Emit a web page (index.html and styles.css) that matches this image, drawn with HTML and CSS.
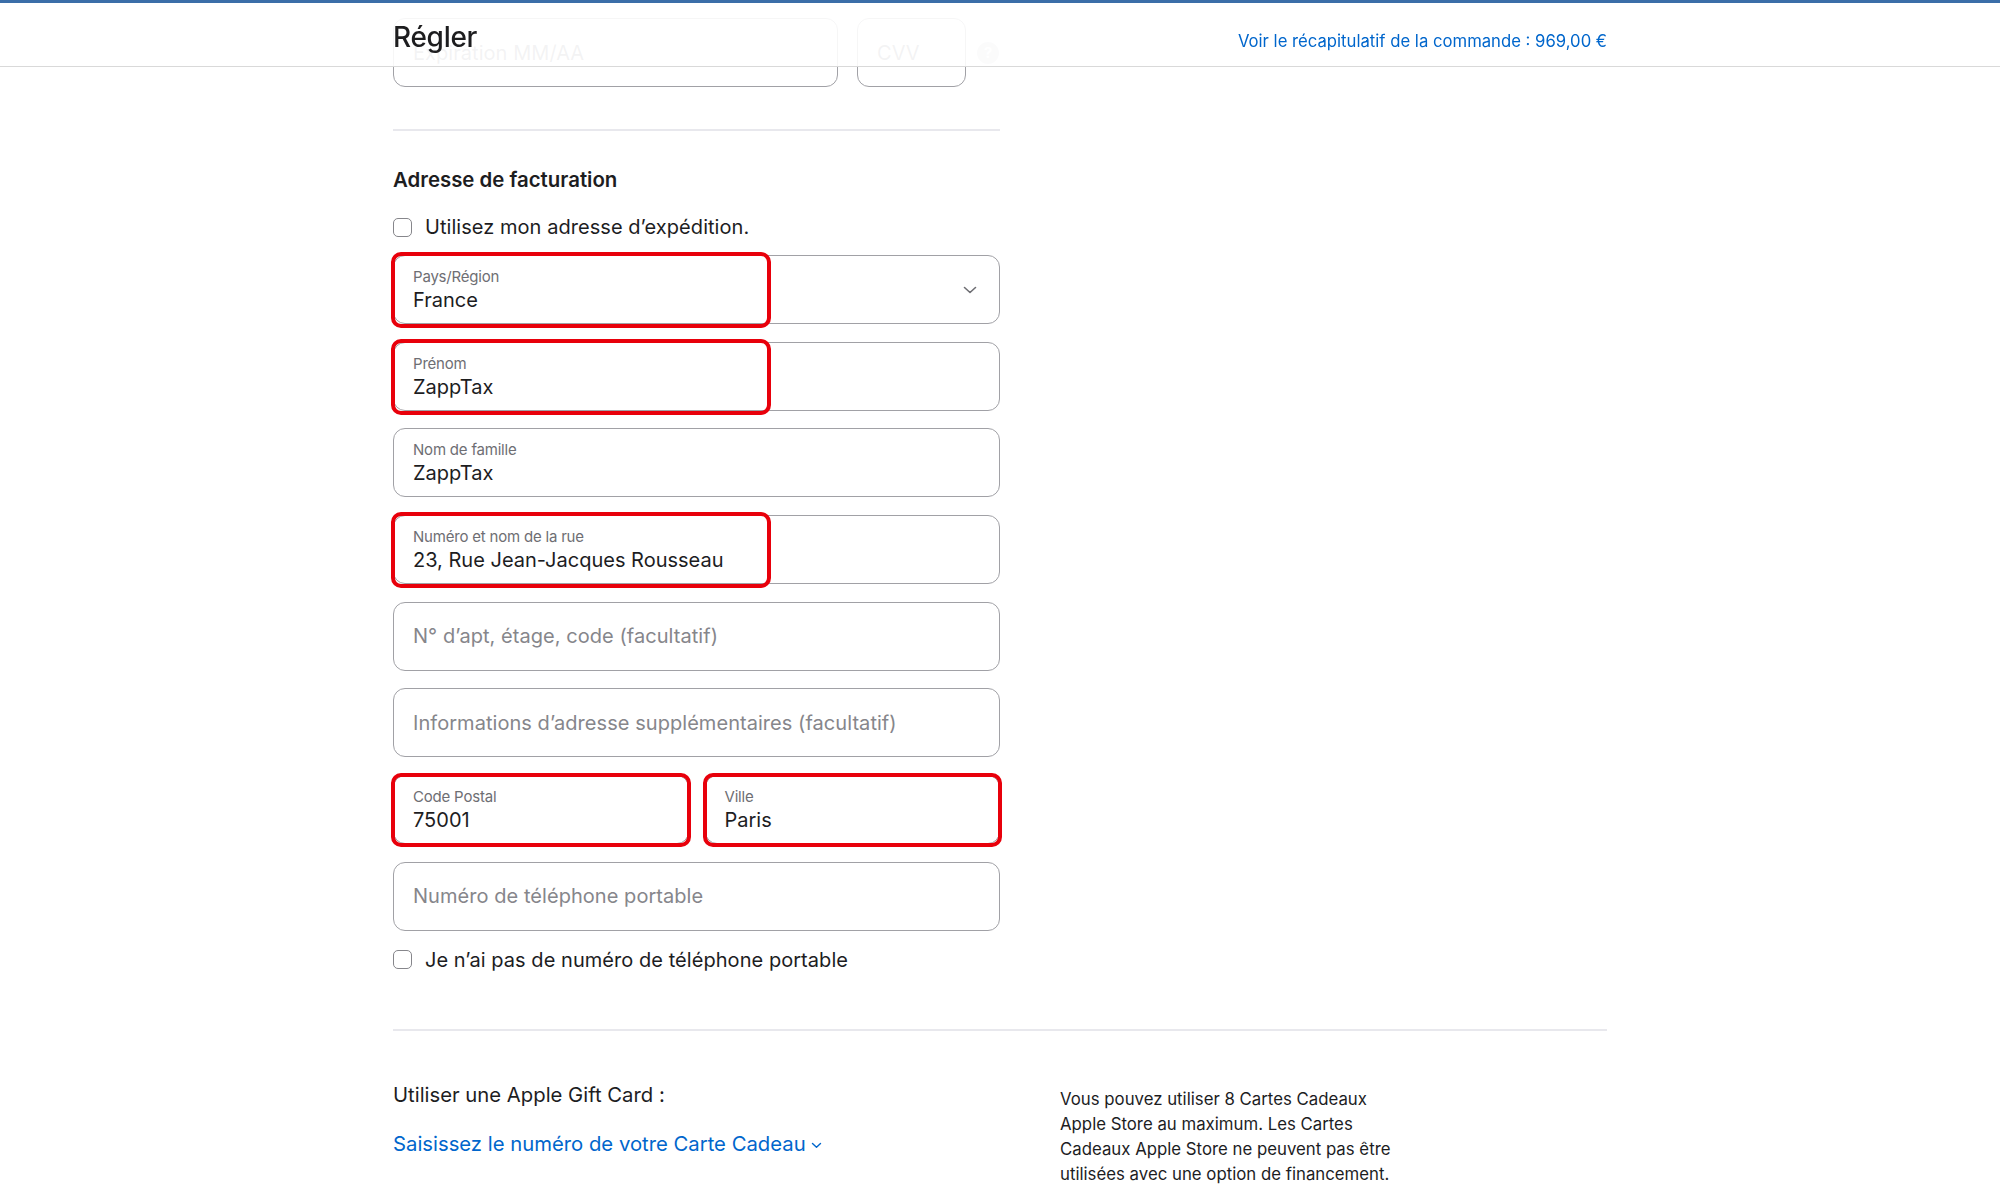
FILE: index.html
```html
<!DOCTYPE html>
<html lang="fr">
<head>
  <meta charset="UTF-8" />
  <title>Régler</title>
  <meta name="viewport" content="width=device-width, initial-scale=1.0"/>
  <link rel="stylesheet" href="styles.css">
</head>
<body>
  <header class="topbar">
    <div class="topbar-inner">
      <h1>Régler</h1>
      <a href="#" class="summary-link">Voir le récapitulatif de la commande : 969,00 €</a>
    </div>
  </header>

  <main class="page">
    <div class="form-col">
      <div class="card-row">
        <div class="field field-placeholder expiry"><span class="placeholder">Expiration MM/AA</span></div>
        <div class="field field-placeholder cvv"><span class="placeholder">CVV</span></div>
        <span class="help">?</span>
      </div>

      <hr class="divider">

      <h2>Adresse de facturation</h2>

      <label class="check-row">
        <input type="checkbox">
        <span>Utilisez mon adresse d’expédition.</span>
      </label>

      <div class="fields">
        <div class="field">
          <span class="label">Pays/Région</span>
          <span class="value">France</span>
          <svg class="chevron" width="14" height="8" viewBox="0 0 14 8"><path d="M1.5 1.5 L7 6.5 L12.5 1.5" fill="none" stroke="#6e6e73" stroke-width="1.6" stroke-linecap="round" stroke-linejoin="round"/></svg>
          <div class="mark"></div>
        </div>

        <div class="field">
          <span class="label">Prénom</span>
          <span class="value">ZappTax</span>
          <div class="mark"></div>
        </div>

        <div class="field">
          <span class="label">Nom de famille</span>
          <span class="value">ZappTax</span>
        </div>

        <div class="field">
          <span class="label">Numéro et nom de la rue</span>
          <span class="value">23, Rue Jean-Jacques Rousseau</span>
          <div class="mark"></div>
        </div>

        <div class="field field-placeholder">
          <span class="placeholder">N° d’apt, étage, code (facultatif)</span>
        </div>

        <div class="field field-placeholder">
          <span class="placeholder">Informations d’adresse supplémentaires (facultatif)</span>
        </div>

        <div class="field-pair">
          <div class="field">
            <span class="label">Code Postal</span>
            <span class="value">75001</span>
            <div class="mark mark-full"></div>
          </div>
          <div class="field">
            <span class="label">Ville</span>
            <span class="value">Paris</span>
            <div class="mark mark-full"></div>
          </div>
        </div>

        <div class="field field-placeholder">
          <span class="placeholder">Numéro de téléphone portable</span>
        </div>
      </div>

      <label class="check-row check-phone">
        <input type="checkbox">
        <span>Je n’ai pas de numéro de téléphone portable</span>
      </label>
    </div>

    <hr class="divider divider-wide">

    <section class="gift">
      <div class="gift-left">
        <p class="gift-title">Utiliser une Apple Gift Card :</p>
        <a href="#" class="gift-link">Saisissez le numéro de votre Carte Cadeau
          <svg width="11" height="7" viewBox="0 0 11 7"><path d="M1.5 1.5 L5.5 5.2 L9.5 1.5" fill="none" stroke="#0066cc" stroke-width="1.4" stroke-linecap="round" stroke-linejoin="round"/></svg>
        </a>
      </div>
      <p class="gift-note">Vous pouvez utiliser 8 Cartes Cadeaux Apple Store au maximum. Les Cartes Cadeaux Apple Store ne peuvent pas être utilisées avec une option de financement.</p>
    </section>
  </main>
</body>
</html>
```

FILE: styles.css
```css
body {
  margin: 0;
  font-family: 'Inter', 'Noto Sans', sans-serif;
  color: #1d1d1f;
  background: #fff;
}

.topbar {
  position: fixed;
  top: 0;
  left: 0;
  right: 0;
  height: 63px;
  border-top: 3px solid #3b6ea8;
  border-bottom: 1px solid #d9d9d9;
  background: rgba(255, 255, 255, 0.9);
  z-index: 10;
}

.topbar-inner {
  width: 1214px;
  margin: 0 auto;
  height: 100%;
  display: flex;
  justify-content: space-between;
  align-items: baseline;
  padding-top: 17px;
  box-sizing: border-box;
}

h1 {
  margin: 0;
  font-size: 28px;
  font-weight: 500;
  letter-spacing: -0.3px;
}

.summary-link {
  font-size: 16.7px;
  color: #0066cc;
  text-decoration: none;
}

.page {
  width: 1214px;
  margin: 0 auto;
  padding-top: 18px;
}

.form-col {
  width: 607px;
}

.card-row {
  display: flex;
  align-items: center;
  gap: 19px;
}

.card-row .expiry {
  width: 445px;
  flex-shrink: 0;
}

.card-row .cvv {
  width: 109px;
  flex-shrink: 0;
}

.help {
  flex-shrink: 0;
  width: 22px;
  height: 22px;
  border-radius: 50%;
  background: #d2d2d7;
  color: #fff;
  font-size: 15px;
  font-weight: 600;
  display: flex;
  align-items: center;
  justify-content: center;
  margin-left: -8px;
}

.divider {
  border: none;
  border-top: 2px solid #e8e8ed;
  margin: 42px 0 0;
}

h2 {
  margin: 36px 0 0;
  font-size: 20.4px;
  font-weight: 600;
  line-height: 26px;
  letter-spacing: 0;
}

.check-row {
  display: flex;
  align-items: center;
  gap: 13px;
  margin-top: 20px;
  font-size: 20px;
  line-height: 28px;
  letter-spacing: 0.05px;
}

.check-row input {
  appearance: none;
  margin: 0;
  width: 19px;
  height: 19px;
  border: 1px solid #86868b;
  border-radius: 5px;
  box-sizing: border-box;
}

.fields {
  display: flex;
  flex-direction: column;
  gap: 17.7px;
  margin-top: 14px;
}

.field {
  position: relative;
  height: 69px;
  border: 1px solid #a1a1a6;
  border-radius: 12px;
  box-sizing: border-box;
  padding: 12px 19px 0;
  display: flex;
  flex-direction: column;
}

.label {
  font-size: 15px;
  line-height: 18px;
  color: #6e6e73;
  letter-spacing: -0.2px;
}

.value {
  margin-top: 1px;
  font-size: 20px;
  line-height: 26px;
  letter-spacing: 0;
}

.field-placeholder {
  padding-top: 0;
  justify-content: center;
}

.placeholder {
  font-size: 20px;
  color: #86868b;
  letter-spacing: 0.05px;
}

.chevron {
  position: absolute;
  right: 22px;
  top: 30px;
}

.field-pair {
  display: grid;
  grid-template-columns: 1fr 1fr;
  gap: 16px;
}

/* red highlight boxes */
.mark {
  position: absolute;
  left: -3px;
  top: -4px;
  width: 380px;
  height: 76px;
  border: 4px solid #e8000b;
  border-radius: 10px;
  box-sizing: border-box;
}

.mark-full {
  left: -3px;
  right: -3px;
  width: auto;
  top: -3px;
  bottom: -4px;
  height: auto;
}

.check-phone {
  margin-top: 15px;
}

.divider-wide {
  margin-top: 55px;
  border-top-width: 2px;
}

.gift {
  display: flex;
  gap: 60px;
  margin-top: 50px;
}

.gift-left {
  width: 607px;
}

.gift-title {
  margin: 0;
  font-size: 20.3px;
  line-height: 28px;
  letter-spacing: 0;
}

.gift-link {
  display: inline-block;
  margin-top: 21px;
  font-size: 20.3px;
  line-height: 28px;
  color: #0066cc;
  text-decoration: none;
  letter-spacing: 0;
}

.gift-link svg {
  vertical-align: middle;
}

.gift-note {
  margin: 6px 0 0;
  max-width: 345px;
  font-size: 16.8px;
  line-height: 25px;
  letter-spacing: 0;
}
```
